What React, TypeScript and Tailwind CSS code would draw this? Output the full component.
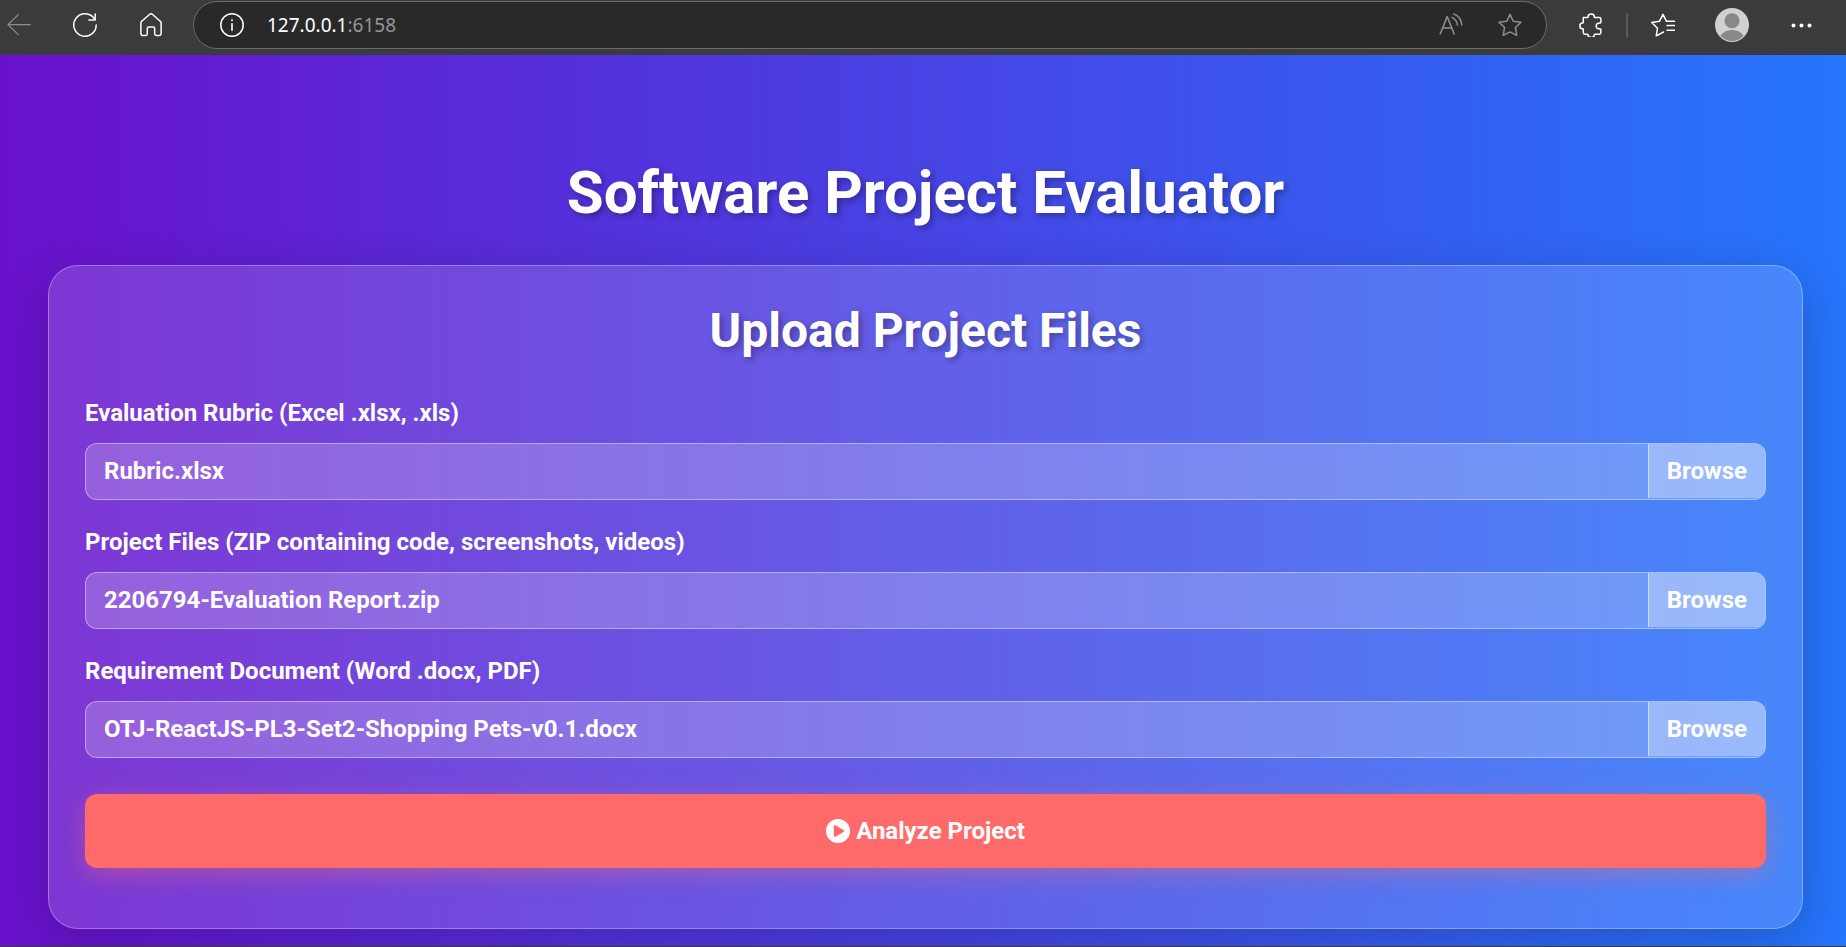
import { useState, type ReactNode } from "react";

function IconButton({ label, className = "", children }: { label: string; className?: string; children: ReactNode }) {
  return (
    <button type="button" aria-label={label} className={`shrink-0 ${className}`}>
      {children}
    </button>
  );
}

function Glyph({ children }: { children: ReactNode }) {
  return (
    <svg
      width="24"
      height="24"
      viewBox="0 0 24 24"
      fill="none"
      stroke="currentColor"
      strokeWidth="1.5"
      strokeLinecap="round"
      strokeLinejoin="round"
      className="block"
    >
      {children}
    </svg>
  );
}

function BrowserBar() {
  const [address] = useState({ host: "127.0.0.1", port: ":6158" });
  return (
    <header className="flex h-[55px] shrink-0 items-start bg-[#3b3b3b] pr-8 pl-[7px] text-white">
      <div className="flex h-[50px] items-center gap-[42px]">
        <IconButton label="Back" className="text-[#8c8c8c]">
          <Glyph>
            <path d="M23.3 11.6H1M11.3 1.6 1 11.6l10.3 10" strokeWidth="1.3" />
          </Glyph>
        </IconButton>
        <IconButton label="Refresh">
          <Glyph>
            <path d="M21.5 6.1A11.2 11.2 0 1 0 23.2 12" />
            <path d="M22.2.9V7h-6.3" />
          </Glyph>
        </IconButton>
        <IconButton label="Home">
          <Glyph>
            <path d="M1.9 10.1c0-.8.3-1.4.9-1.9l7.9-6.9a2 2 0 0 1 2.6 0l7.9 6.9c.6.5.9 1.1.9 1.9v10.6c0 1-.7 1.7-1.7 1.7h-3.1c-.9 0-1.6-.7-1.6-1.6v-5.4c0-.9-.6-1.5-1.5-1.5h-4.4c-.9 0-1.5.6-1.5 1.5v5.4c0 .9-.7 1.6-1.6 1.6H3.6c-1 0-1.7-.7-1.7-1.7z" />
          </Glyph>
        </IconButton>
      </div>

      <div className="mt-px ml-[30px] flex h-12 min-w-0 flex-1 items-center rounded-full border border-[#6b6b6b] bg-[#292929] pr-6 pl-[26px]">
        <IconButton label="Site information">
          <Glyph>
            <circle cx="12" cy="12" r="11.2" />
            <path d="M12 10.8v6.4" strokeWidth="1.6" />
            <circle cx="12" cy="7.2" r="1" fill="currentColor" stroke="none" />
          </Glyph>
        </IconButton>
        <p className="ml-[23px] flex-1 font-['Noto_Sans',sans-serif] text-[19px] leading-8">
          {address.host}
          <span className="text-[#969696]">{address.port}</span>
        </p>
        <div className="flex items-center gap-[35px] text-[#8f8f8f]">
          <IconButton label="Read aloud">
            <Glyph>
              <path d="M1.2 21 8.2 3.6 15.2 21M3.8 15h8.8" />
              <path d="M13.2 4.6c2.9 1.300 4.900 3.900 5.200 7.400M14.600.9c4.700 1.800 7.800 5.600 8.300 11.100" strokeWidth="1.4" />
            </Glyph>
          </IconButton>
          <IconButton label="Add to favorites">
            <Glyph>
              <path d="m12 1.4 3.2 6.9 7.8 1-5.6 5.2 1.4 7.8L12 18.9l-6.8 3.4 1.4-7.8L1 9.3l7.8-1z" />
            </Glyph>
          </IconButton>
        </div>
      </div>

      <div className="flex h-[50px] items-center">
        <IconButton label="Extensions" className="ml-8">
          <Glyph>
            <path d="M4.3 4.5h4.1c.5 0 .7-.4.7-.8C9.1 2.1 10.5 1 12.2 1s3.1 1.100 3.100 2.700c0 .4.200.8.700.8h4.200c1 0 1.700.7 1.700 1.700v3c0 .5-.4.7-.8.7-1.700 0-3.900.9-3.900 3s2.200 3 3.900 3c.4 0 .8.200.8.700v2.900c0 1-.7 1.700-1.700 1.700H16c-.5 0-.7.4-.7.8 0 1.500-1.400 2.500-3.100 2.500s-3.100-1-3.100-2.500c0-.4-.2-.8-.7-.8H6c-1 0-1.700-.7-1.700-1.700v-3c0-.5-.4-.8-.8-.8C2 15.700.9 14.500.9 12.900S2 10.100 3.500 10.100c.4 0 .8-.3.8-.8z" />
          </Glyph>
        </IconButton>
        <span className="ml-[23px] h-6 w-0.5 bg-[#5c5c5c]" />
        <IconButton label="Favorites" className="ml-[23px]">
          <Glyph>
            <path d="M12.6 19 5.2 22.8l1.3-7.5L.8 9.4l7.6-1.100L12 1.4l3.500 6.900h8M16 12.600h7.500M16 17.300h7.500" />
          </Glyph>
        </IconButton>
        <IconButton label="Profile" className="ml-10">
          <svg width="34" height="34" viewBox="0 0 34 34" className="block">
            <defs>
              <clipPath id="avatar-edge">
                <circle cx="17" cy="17" r="16" />
              </clipPath>
            </defs>
            <circle cx="17" cy="17" r="17" fill="#d2d0ce" />
            <g clipPath="url(#avatar-edge)" fill="#8a8886">
              <circle cx="17" cy="12.7" r="7.5" />
              <ellipse cx="17" cy="33" rx="13" ry="11" />
            </g>
          </svg>
        </IconButton>
        <IconButton label="Settings and more" className="ml-[41px]">
          <svg width="24" height="24" viewBox="0 0 24 24" fill="currentColor" className="block">
            <circle cx="3.5" cy="12.5" r="2" />
            <circle cx="11.5" cy="12.5" r="2" />
            <circle cx="19.5" cy="12.5" r="2" />
          </svg>
        </IconButton>
      </div>
    </header>
  );
}

function FileField({ id, label, file }: { id: string; label: string; file: string }) {
  return (
    <div>
      <label htmlFor={id} className="block text-[24px] leading-9 font-bold">
        {label}
      </label>
      <div className="mt-3 flex h-[57px] overflow-hidden rounded-xl border border-white/40 bg-white/20">
        <input
          id={id}
          type="text"
          readOnly
          defaultValue={file}
          className="min-w-0 flex-1 bg-transparent px-[18px] pb-0.5 font-bold outline-none"
        />
        <button type="button" className="mb-px border-l border-white/50 bg-white/30 px-[18px] font-bold">
          Browse
        </button>
      </div>
    </div>
  );
}

const fields = [
  { id: "rubric", label: "Evaluation Rubric (Excel .xlsx, .xls)", file: "Rubric.xlsx" },
  { id: "project", label: "Project Files (ZIP containing code, screenshots, videos)", file: "2206794-Evaluation Report.zip" },
  { id: "requirements", label: "Requirement Document (Word .docx, PDF)", file: "OTJ-ReactJS-PL3-Set2-Shopping Pets-v0.1.docx" },
];

export default function App() {
  return (
    <div className="flex min-h-screen flex-col font-[Roboto,sans-serif]">
      <BrowserBar />
      <main className="flex-1 overflow-hidden border-b border-[#3b3b3b] bg-linear-to-r/srgb from-[#6a11cb] to-[#2575fc] pt-[102px] pr-[43px] pb-4 pl-12 text-[24px] text-white">
        <h1 className="text-center text-[60px] leading-[72px] font-bold [text-shadow:3px_3px_6px_rgba(0,0,0,0.3)]">
          Software Project Evaluator
        </h1>
        <section className="mt-9 rounded-[30px] border border-white/30 bg-white/15 px-9 pt-9 pb-[60px] shadow-[0_12px_48px_rgba(0,0,0,0.2)]">
          <h2 className="text-center text-[48px] leading-[57px] font-bold [text-shadow:3px_3px_6px_rgba(0,0,0,0.3)]">
            Upload Project Files
          </h2>
          <form className="mt-9" onSubmit={(event) => event.preventDefault()}>
            <div className="flex flex-col gap-6">
              {fields.map((field) => (
                <FileField key={field.id} {...field} />
              ))}
            </div>
            <button
              type="submit"
              className="mt-9 flex h-[74px] w-full items-center justify-center gap-1.5 rounded-xl bg-[#ff6b6b] font-bold shadow-[0_6px_24px_rgba(255,107,107,0.4)]"
            >
              <svg width="24" height="24" viewBox="0 0 24 24" fill="currentColor" aria-hidden="true">
                <path
                  fillRule="evenodd"
                  d="M12 0a12 12 0 1 0 0 24 12 12 0 0 0 0-24zM9.4 6.3l8.2 4.800c.7.4.7 1.400 0 1.800l-8.200 4.800c-.7.4-1.600-.1-1.600-.9V7.200c0-.8.900-1.300 1.600-.9z"
                />
              </svg>
              Analyze Project
            </button>
          </form>
        </section>
      </main>
    </div>
  );
}
